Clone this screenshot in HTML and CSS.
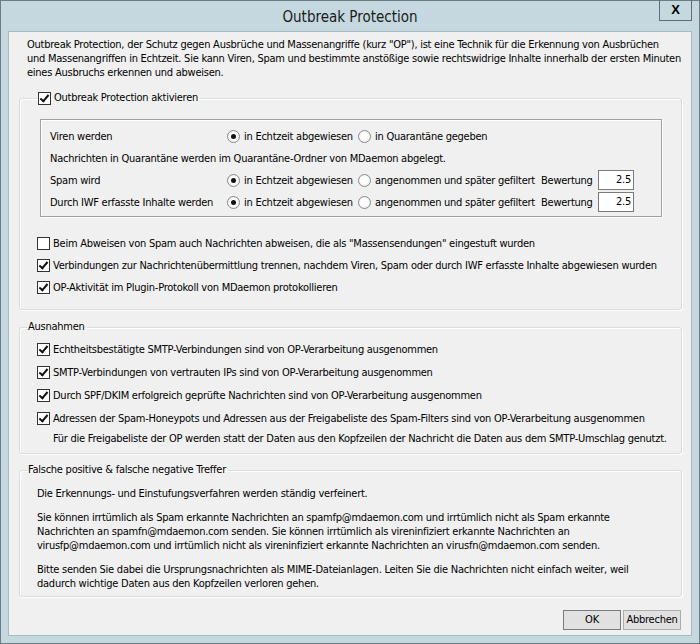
FILE: index.html
```html
<!DOCTYPE html>
<html lang="de">
<head>
    <meta charset="UTF-8">
    <title>Outbreak Protection</title>
    <link rel="stylesheet" href="styles.css">
</head>
<body>
    <div class="window">
        <div class="titlebar">
            <span class="title">Outbreak Protection</span>
            <span class="close">X</span>
        </div>

        <div class="client">
            <p class="intro">Outbreak Protection, der Schutz gegen Ausbrüche und Massenangriffe (kurz "OP"), ist eine Technik für die Erkennung von Ausbrüchen<br>und Massenangriffen in Echtzeit. Sie kann Viren, Spam und bestimmte anstößige sowie rechtswidrige Inhalte innerhalb der ersten Minuten<br>eines Ausbruchs erkennen und abweisen.</p>

            <fieldset class="group group-main">
                <legend><span class="check"><span class="box on"></span>Outbreak Protection aktivieren</span></legend>

                <div class="actions">
                    <span>Viren werden</span>
                    <span class="radio"><span class="dot on"></span>in Echtzeit abgewiesen</span>
                    <span class="radio span-rest"><span class="dot"></span>in Quarantäne gegeben</span>

                    <span class="span-all">Nachrichten in Quarantäne werden im Quarantäne-Ordner von MDaemon abgelegt.</span>

                    <span>Spam wird</span>
                    <span class="radio"><span class="dot on"></span>in Echtzeit abgewiesen</span>
                    <span class="radio"><span class="dot"></span>angenommen und später gefiltert</span>
                    <span>Bewertung</span>
                    <span class="field">2.5</span>

                    <span>Durch IWF erfasste Inhalte werden</span>
                    <span class="radio"><span class="dot on"></span>in Echtzeit abgewiesen</span>
                    <span class="radio"><span class="dot"></span>angenommen und später gefiltert</span>
                    <span>Bewertung</span>
                    <span class="field">2.5</span>
                </div>

                <div class="checks">
                    <span class="check"><span class="box"></span>Beim Abweisen von Spam auch Nachrichten abweisen, die als "Massensendungen" eingestuft wurden</span>
                    <span class="check"><span class="box on"></span>Verbindungen zur Nachrichtenübermittlung trennen, nachdem Viren, Spam oder durch IWF erfasste Inhalte abgewiesen wurden</span>
                    <span class="check"><span class="box on"></span>OP-Aktivität im Plugin-Protokoll von MDaemon protokollieren</span>
                </div>
            </fieldset>

            <fieldset class="group group-except">
                <legend>Ausnahmen</legend>
                <div class="checks">
                    <span class="check"><span class="box on"></span>Echtheitsbestätigte SMTP-Verbindungen sind von OP-Verarbeitung ausgenommen</span>
                    <span class="check"><span class="box on"></span>SMTP-Verbindungen von vertrauten IPs sind von OP-Verarbeitung ausgenommen</span>
                    <span class="check"><span class="box on"></span>Durch SPF/DKIM erfolgreich geprüfte Nachrichten sind von OP-Verarbeitung ausgenommen</span>
                    <span class="check"><span class="box on"></span>Adressen der Spam-Honeypots und Adressen aus der Freigabeliste des Spam-Filters sind von OP-Verarbeitung ausgenommen</span>
                    <span class="note">Für die Freigabeliste der OP werden statt der Daten aus den Kopfzeilen der Nachricht die Daten aus dem SMTP-Umschlag genutzt.</span>
                </div>
            </fieldset>

            <fieldset class="group group-info">
                <legend>Falsche positive &amp; falsche negative Treffer</legend>
                <p>Die Erkennungs- und Einstufungsverfahren werden ständig verfeinert.</p>
                <p>Sie können irrtümlich als Spam erkannte Nachrichten an spamfp@mdaemon.com und irrtümlich nicht als Spam erkannte<br>Nachrichten an spamfn@mdaemon.com senden. Sie können irrtümlich als vireninfiziert erkannte Nachrichten an<br>virusfp@mdaemon.com und irrtümlich nicht als vireninfiziert erkannte Nachrichten an virusfn@mdaemon.com senden.</p>
                <p>Bitte senden Sie dabei die Ursprungsnachrichten als MIME-Dateianlagen. Leiten Sie die Nachrichten nicht einfach weiter, weil<br>dadurch wichtige Daten aus den Kopfzeilen verloren gehen.</p>
            </fieldset>

            <div class="buttons">
                <span class="btn btn-ok">OK</span>
                <span class="btn">Abbrechen</span>
            </div>
        </div>
    </div>
</body>
</html>
```

FILE: styles.css
```css
body {
    margin: 0;
    font-family: "DejaVu Sans Condensed", "Liberation Sans", sans-serif;
    font-size: 11px;
    letter-spacing: -0.25px;
    color: #000;
}
.window {
    width: 700px;
    height: 644px;
    box-sizing: border-box;
    border: 1px solid #6e7c86;
    background: #c5d8df;
    display: flex;
    flex-direction: column;
}
.titlebar {
    position: relative;
    height: 30px;
    line-height: 32px;
    text-align: center;
}
.title {
    font-size: 15px;
    letter-spacing: 0;
    color: #1a1a1a;
}
.close {
    position: absolute;
    top: -1px;
    right: 7px;
    width: 31px;
    height: 20px;
    border: 1px solid #5f6d77;
    border-top: none;
    line-height: 20px;
    font-family: "Liberation Sans", sans-serif;
    font-weight: bold;
    font-size: 13px;
    letter-spacing: 0;
}
.client {
    flex: 1;
    margin: 0 7px 7px;
    background: #f0f0f0;
    border: 1px solid #a8bac2;
    padding: 0 9px 0 10px;
}
.intro {
    margin: 6px 0 0 8px;
    line-height: 14px;
    white-space: nowrap;
}
.group {
    margin: 0;
    min-width: 0;
    border: 1px solid #d7dde1;
    border-radius: 3px;
    box-shadow: inset 1px 1px 0 #fff, 1px 1px 0 #fff;
    padding: 0 0 0 17px;
}
.group legend {
    padding: 0 2px 0 1px;
    margin-left: -10px;
    line-height: 14px;
}
.group-main {
    margin-top: 11px;
    padding-bottom: 11px;
}
.group-main legend {
    margin-left: 0;
}
.group-except {
    margin-top: 10px;
    padding-bottom: 5px;
}
.group-info {
    margin-top: 9px;
    padding: 0 10px 5px 17px;
}
.check {
    display: flex;
    align-items: center;
    height: 22px;
    white-space: nowrap;
}
legend .check {
    height: 14px;
}
.box {
    width: 11px;
    height: 11px;
    border: 1px solid #333;
    background: #fff;
    margin-right: 3px;
    position: relative;
    flex: none;
}
.box.on::after {
    content: "";
    position: absolute;
    left: 3px;
    top: 0;
    width: 3px;
    height: 7px;
    border: solid #111;
    border-width: 0 2px 2px 0;
    transform: rotate(40deg);
}
.actions {
    display: grid;
    grid-template-columns: 177px 131px 183px 57px 36px;
    grid-auto-rows: 22px;
    align-items: center;
    white-space: nowrap;
    margin: 14px 19px 0 3px;
    padding: 5px 0 3px 9px;
    border: 1px solid #a0a0a0;
    box-shadow: inset 1px 1px 0 #fff, 1px 1px 0 #fff;
}
.span-all {
    grid-column: 1 / -1;
}
.span-rest {
    grid-column: 3 / -1;
}
.radio {
    display: flex;
    align-items: center;
}
.dot {
    width: 11px;
    height: 11px;
    border: 1px solid #8a8a8a;
    border-radius: 50%;
    background: radial-gradient(circle, #fff 40%, #e4e4e4 100%);
    margin-right: 4px;
    position: relative;
    flex: none;
}
.dot.on::after {
    content: "";
    position: absolute;
    left: 3px;
    top: 3px;
    width: 5px;
    height: 5px;
    border-radius: 50%;
    background: #111;
}
.field {
    height: 18px;
    border: 1px solid #7a7a7a;
    background: #fff;
    text-align: right;
    padding-right: 2px;
    line-height: 18px;
}
.checks {
    display: flex;
    flex-direction: column;
    margin-top: 15px;
}
.group-except .checks {
    margin-top: 4px;
}
.group-except .check {
    height: 23px;
}
.note {
    padding-left: 16px;
    line-height: 18px;
    white-space: nowrap;
}
.group-info p {
    margin: 10px 0 0 0;
    line-height: 14px;
    white-space: nowrap;
}
.buttons {
    display: flex;
    justify-content: flex-end;
    gap: 2px;
    margin: 13px 1px 0 0;
}
.btn {
    width: 56px;
    height: 18px;
    border: 1px solid #adadad;
    background: #e1e1e1;
    text-align: center;
    line-height: 18px;
}
.btn-ok {
    border-color: #7a7a7a;
}
```
